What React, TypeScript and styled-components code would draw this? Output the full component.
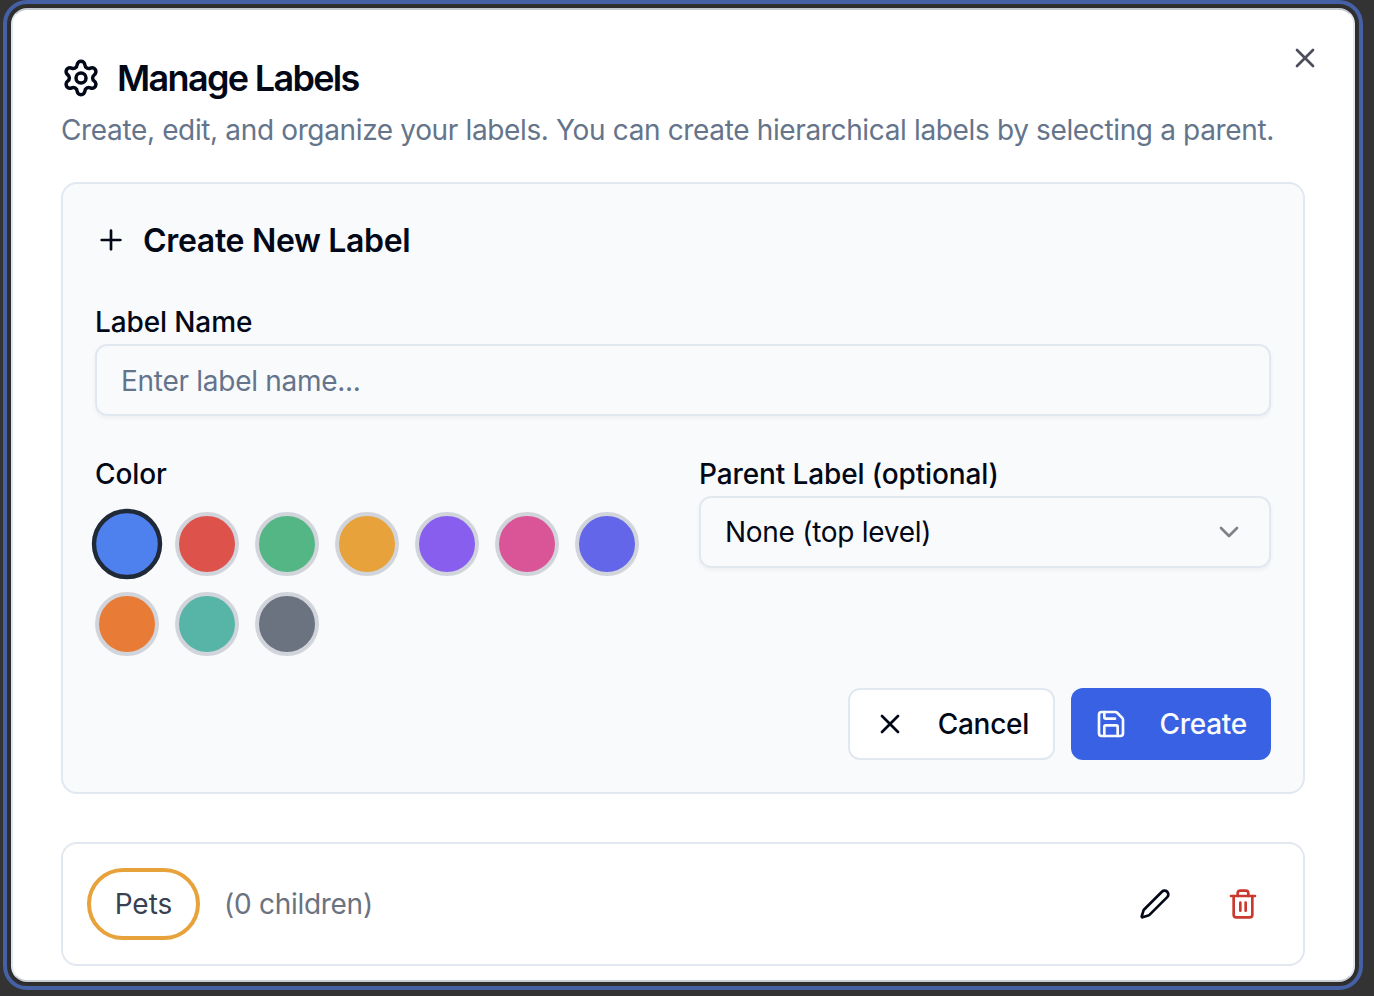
import React, { useState } from "react";
import styled, { createGlobalStyle } from "styled-components";
import { ChevronDown, Pen, Plus, Save, Settings, Trash2, X } from "lucide-react";

const GlobalStyle = createGlobalStyle`
  *, *::before, *::after { box-sizing: border-box; }
  body {
    margin: 0;
    background: #333333;
    color: #020817;
    font-family: Inter, "Liberation Sans", sans-serif;
    font-size: 28px;
    line-height: 40px;
    letter-spacing: -0.28px;
    overflow: hidden;
  }
  button, input { font: inherit; color: inherit; letter-spacing: inherit; }
`;

const Backdrop = styled.div`
  height: 996px;
  padding: 8px 19px 14px 11px;
`;

const Dialog = styled.section`
  position: relative;
  height: 974px;
  padding: 48px 48px 0;
  display: flex;
  flex-direction: column;
  background: #ffffff;
  border: 2px solid #e2e8f0;
  border-top-color: #c4cad0;
  border-bottom-color: #c9ced3;
  border-radius: 16px;
  outline: 4px solid #4560a5;
  outline-offset: 4px;
  box-shadow: 0 0 6px 2px rgba(0, 0, 0, 0.2);
`;

const CloseButton = styled.button`
  position: absolute;
  top: 32px;
  right: 32px;
  display: flex;
  padding: 0;
  border: 0;
  background: none;
  color: #4b4f5b;
`;

const Title = styled.h1`
  display: flex;
  align-items: center;
  gap: 16px;
  height: 40px;
  margin: 0;
  font-size: 36px;
  font-weight: 600;
  letter-spacing: -1.67px;
`;

const Description = styled.p`
  margin: 12px 0 0;
  height: 40px;
  color: #64748b;
  white-space: nowrap;
  letter-spacing: -0.358px;
`;

const Panel = styled.div`
  margin-top: 32px;
  height: 612px;
  padding: 32px;
  display: flex;
  flex-direction: column;
  background: #f9fafc;
  border: 2px solid #e2e8f0;
  border-radius: 16px;
`;

const PanelTitle = styled.h2`
  display: flex;
  align-items: center;
  gap: 16px;
  height: 48px;
  margin: 0 0 32px;
  font-size: 32px;
  font-weight: 600;
  line-height: 48px;
  letter-spacing: -0.32px;

  span { padding-top: 2px; }
`;

const Field = styled.div`
  display: flex;
  flex-direction: column;
  min-width: 0;
`;

const Caption = styled.label`
  height: 48px;
  padding-top: 2px;
  line-height: 48px;
  font-weight: 500;
  letter-spacing: -0.12px;
`;

const TextInput = styled.input`
  height: 72px;
  padding: 2px 24px 0;
  border: 2px solid #e2e8f0;
  border-radius: 12px;
  background: transparent;
  box-shadow: 0 2px 4px rgba(0, 0, 0, 0.05);
  outline: 0;
  &::placeholder { color: #64748b; opacity: 1; }
`;

const Columns = styled.div`
  display: grid;
  grid-template-columns: 1fr 1fr;
  gap: 32px;
  margin-top: 32px;
`;

const Swatches = styled.div`
  display: flex;
  flex-wrap: wrap;
  gap: 16px;
  padding-top: 16px;
`;

const Swatch = styled.button<{ $color: string; $selected: boolean }>`
  width: 64px;
  height: 64px;
  padding: 0;
  border: 4px solid ${(p) => (p.$selected ? "#1f2937" : "#d1d5db")};
  border-radius: 50%;
  background: ${(p) => p.$color};
  transform: ${(p) => (p.$selected ? "scale(1.1)" : "none")};
`;

const Select = styled.button`
  display: flex;
  align-items: center;
  justify-content: space-between;
  height: 72px;
  padding: 0 24px;
  border: 2px solid #e2e8f0;
  border-radius: 12px;
  background: transparent;
  box-shadow: 0 2px 4px rgba(0, 0, 0, 0.05);
  svg { color: #808287; }
`;

const Actions = styled.div`
  display: flex;
  justify-content: flex-end;
  gap: 16px;
  margin-top: 32px;
`;

const ActionButton = styled.button<{ $primary?: boolean }>`
  display: flex;
  align-items: center;
  justify-content: space-between;
  width: ${(p) => (p.$primary ? 200 : 207)}px;
  height: 72px;
  padding: 0 24px;
  border: ${(p) => (p.$primary ? "0" : "2px solid #e2e8f0")};
  border-radius: 12px;
  background: ${(p) => (p.$primary ? "#3862e3" : "#ffffff")};
  color: ${(p) => (p.$primary ? "#f8fafc" : "#020817")};
  font-weight: 500;
`;

const LabelRow = styled.div`
  display: flex;
  align-items: center;
  height: 124px;
  margin-top: 48px;
  padding: 0 24px;
  border: 2px solid #e2e8f0;
  border-radius: 16px;
`;

const Tag = styled.span`
  display: flex;
  align-items: center;
  justify-content: center;
  width: 113px;
  height: 72px;
  border: 4px solid #e8a23b;
  border-radius: 36px;
  color: #374151;
  letter-spacing: 0;
`;

const ChildCount = styled.span`
  flex: 1;
  margin-left: 24px;
  color: #6b7280;
`;

const IconButton = styled.button<{ $danger?: boolean }>`
  display: flex;
  align-items: center;
  justify-content: center;
  width: 72px;
  height: 64px;
  margin-left: 16px;
  padding: 0;
  border: 0;
  background: none;
  color: ${(p) => (p.$danger ? "#cb382d" : "#020817")};
`;

const colors = [
  "#4e81ee", "#de524c", "#55b685", "#e8a23b", "#875eee",
  "#da5597", "#6366e8", "#e87b35", "#56b5a7", "#6b7280",
];

export default function App() {
  const [selected, setSelected] = useState(colors[0]);
  return (
    <>
      <GlobalStyle />
      <Backdrop>
        <Dialog role="dialog" aria-labelledby="dialog-title">
          <CloseButton aria-label="Close"><X size={32} /></CloseButton>
          <Title id="dialog-title"><Settings size={40} strokeWidth={2.1} />Manage Labels</Title>
          <Description>
            Create, edit, and organize your labels. You can create hierarchical labels by selecting a parent.
          </Description>
          <Panel>
            <PanelTitle><Plus size={32} /><span>Create New Label</span></PanelTitle>
            <Field>
              <Caption htmlFor="label-name">Label Name</Caption>
              <TextInput id="label-name" placeholder="Enter label name..." />
            </Field>
            <Columns>
              <Field>
                <Caption as="span">Color</Caption>
                <Swatches>
                  {colors.map((color) => (
                    <Swatch
                      key={color}
                      $color={color}
                      $selected={color === selected}
                      onClick={() => setSelected(color)}
                    />
                  ))}
                </Swatches>
              </Field>
              <Field>
                <Caption as="span">Parent Label (optional)</Caption>
                <Select>None (top level)<ChevronDown size={32} /></Select>
              </Field>
            </Columns>
            <Actions>
              <ActionButton><X size={32} />Cancel</ActionButton>
              <ActionButton $primary><Save size={32} />Create</ActionButton>
            </Actions>
          </Panel>
          <LabelRow>
            <Tag>Pets</Tag>
            <ChildCount>(0 children)</ChildCount>
            <IconButton aria-label="Edit"><Pen size={32} /></IconButton>
            <IconButton aria-label="Delete" $danger><Trash2 size={32} /></IconButton>
          </LabelRow>
        </Dialog>
      </Backdrop>
    </>
  );
}
